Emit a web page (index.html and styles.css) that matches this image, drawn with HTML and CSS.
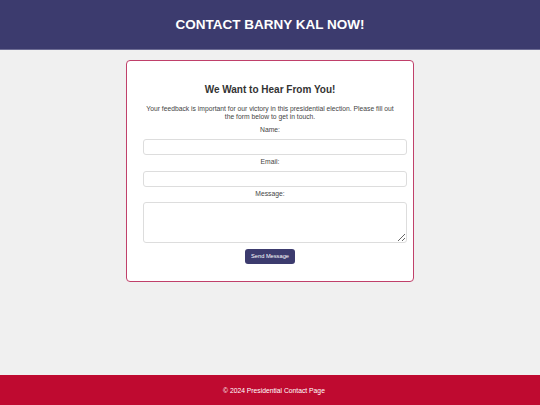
FILE: index.html
```html
<!DOCTYPE html>
<html lang="en">
<head>
<meta charset="utf-8">
<title>Contact Barny Kal</title>
<link rel="stylesheet" href="styles.css">
</head>
<body>
<header class="site-header">
  <h1 class="site-title">CONTACT BARNY KAL NOW!</h1>
</header>
<main class="main">
  <section class="card">
    <h2 class="card-title">We Want to Hear From You!</h2>
    <p class="card-intro">Your feedback is important for our victory in this presidential election. Please fill out the form below to get in touch.</p>
    <form class="form">
      <label class="label" for="name">Name:</label>
      <input class="field" id="name" type="text">
      <label class="label" for="email">Email:</label>
      <input class="field" id="email" type="email">
      <label class="label label-area" for="message">Message:</label>
      <textarea class="field area" id="message"></textarea>
      <button class="btn" type="button">Send Message</button>
    </form>
  </section>
</main>
<footer class="site-footer">
  <p class="footer-text">© 2024 Presidential Contact Page</p>
</footer>
</body>
</html>
```
FILE: styles.css
```css
html, body { margin: 0; padding: 0; }
body {
  font-family: "Liberation Sans", Arial, sans-serif;
  background: #f0f0f0;
  color: #333;
  min-height: 100vh;
  display: flex;
  flex-direction: column;
}
.site-header {
  box-sizing: border-box;
  background: #3c3b6e;
  height: 50px;
  display: flex;
  align-items: center;
  justify-content: center;
  border-bottom: 1px solid #6d6c94;
}
.site-title {
  margin: 0;
  color: #fff;
  font-size: 13.5px;
  font-weight: bold;
  line-height: 16px;
}
.main {
  flex: 1;
  display: flex;
  justify-content: center;
  align-items: flex-start;
  padding-top: 10px;
}
.card {
  box-sizing: border-box;
  width: 288px;
  background: #fff;
  border: 1px solid #c0406a;
  border-radius: 4px;
  padding: 23px 16px 17px;
  text-align: center;
}
.card-title {
  margin: 0;
  font-size: 10px;
  line-height: 12px;
  font-weight: bold;
  color: #333;
}
.card-intro {
  margin: 9px 0 0;
  font-size: 6.75px;
  line-height: 7.8px;
  color: #444;
}
.form {
  display: flex;
  flex-direction: column;
  align-items: center;
  margin-top: 5px;
}
.label {
  font-size: 6.75px;
  line-height: 8px;
  color: #444;
  margin: 0 0 5px;
}
.label-area {
  margin-bottom: 4px;
}
.field {
  box-sizing: content-box;
  display: block;
  align-self: stretch;
  width: 100%;
  height: 6px;
  border: 1px solid #ddd;
  border-radius: 3px;
  background: #fff;
  margin: 0 0 3px;
  padding: 4px;
  font: inherit;
}
.area {
  height: 31px;
  margin-bottom: 6px;
  resize: vertical;
}
.btn {
  width: 50px;
  height: 15px;
  background: #3c3b6e;
  color: #fff;
  border: none;
  border-radius: 3px;
  font-family: "Liberation Sans", Arial, sans-serif;
  font-size: 5.7px;
  padding: 0;
}
.site-footer {
  background: #bf0a30;
  height: 30px;
  display: flex;
  align-items: center;
  justify-content: center;
  padding-left: 8px;
}
.footer-text {
  margin: 0;
  color: #fff;
  font-size: 6.75px;
}
```
